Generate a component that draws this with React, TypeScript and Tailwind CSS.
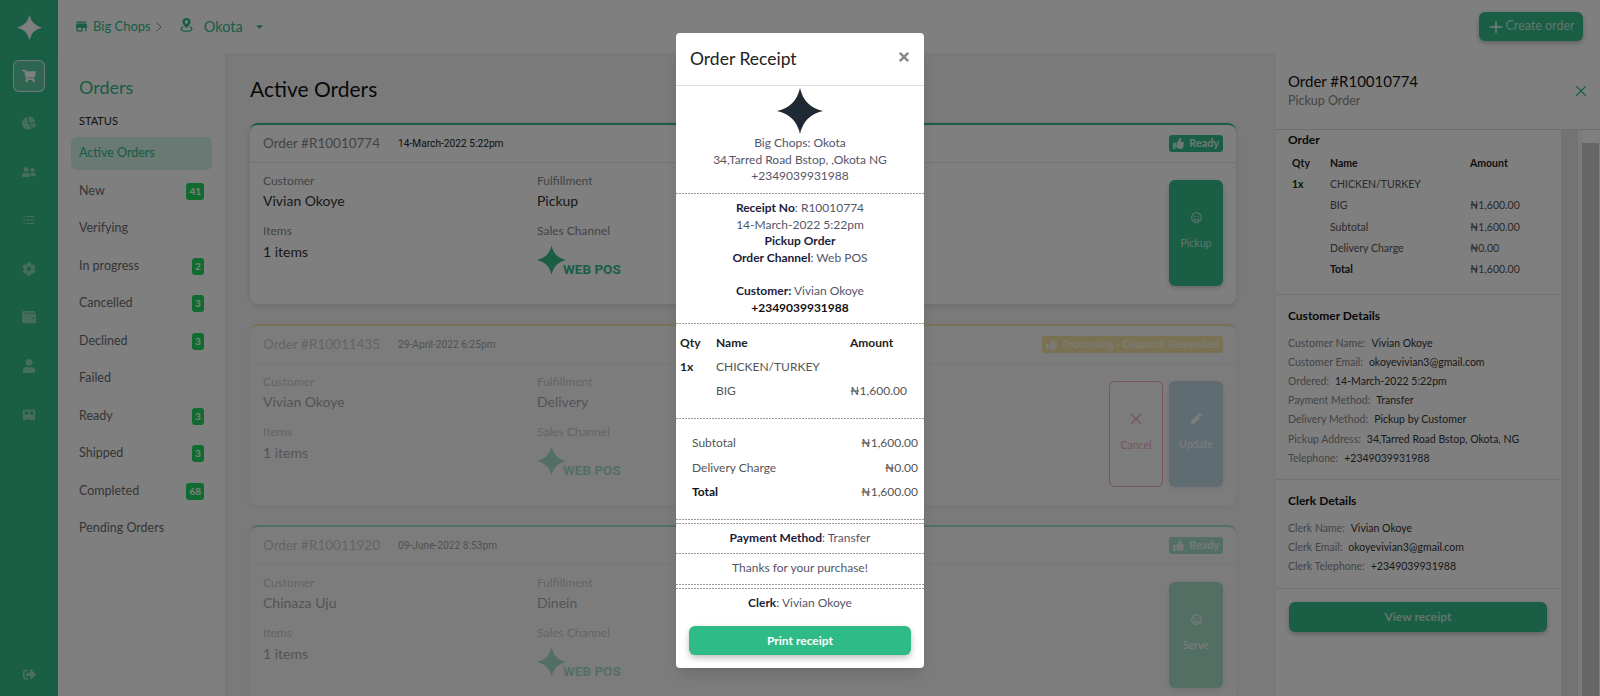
import React from 'react';
import { FaShoppingCart, FaChartPie, FaUserFriends, FaCog, FaWallet, FaUser, FaThumbsUp, FaRegSmile, FaPen, FaSignOutAlt, FaCaretDown, FaTimes } from 'react-icons/fa';
import { MdStore, MdFormatListBulleted } from 'react-icons/md';
import { ChevronRight, Plus, X } from 'lucide-react';

const font = "font-['Lato','Noto_Sans',sans-serif]";

function Star({ className }: { className?: string }) {
  return (
    <svg viewBox="0 0 100 100" className={className} fill="currentColor">
      <path d="M50 0 Q59 41 100 50 Q59 59 50 100 Q41 59 0 50 Q41 41 50 0 Z" />
    </svg>
  );
}

function BusIcon({ className }: { className?: string }) {
  return (
    <svg viewBox="0 0 16 14" className={className} fill="currentColor">
      <path fillRule="evenodd" d="M1 1h14v10.5a1.5 1.5 0 0 1-3 0 1.5 1.5 0 0 1-3 0 1.5 1.5 0 0 1-2 0 1.5 1.5 0 0 1-3 0 1.5 1.5 0 0 1-3 0Z M3 3v3.5h4V3Z M9 3v3.5h4V3Z" />
    </svg>
  );
}

function PinIcon({ className }: { className?: string }) {
  return (
    <svg viewBox="0 0 16 18" className={className} fill="none" stroke="currentColor">
      <path fill="currentColor" stroke="none" fillRule="evenodd" d="M8 0a5.2 5.2 0 0 1 5.2 5.2C13.2 8.6 8 13 8 13S2.8 8.6 2.8 5.2A5.2 5.2 0 0 1 8 0Zm0 3a2.2 2.2 0 1 0 0 4.4A2.2 2.2 0 0 0 8 3Z" />
      <path strokeWidth="1.6" d="M4 11.5C2.3 12.1 1 13 1 14.2 1 16 4.2 17 8 17s7-1 7-2.8c0-1.2-1.3-2.1-3-2.7" />
    </svg>
  );
}

const railIcons = [FaChartPie, FaUserFriends, MdFormatListBulleted, FaCog, FaWallet, FaUser, BusIcon];

function Rail() {
  return (
    <div className="w-[58px] shrink-0 bg-[#34bd8a] flex flex-col items-center">
      <Star className="w-[25px] h-[25px] text-white mt-[15px]" />
      <div className="w-8 h-8 mt-[20px] rounded-md border border-white/80 bg-white/20 flex items-center justify-center text-white">
        <FaShoppingCart className="text-[14px]" />
      </div>
      <div className="flex flex-col items-center gap-[32.6px] mt-[23px] text-white/45">
        {railIcons.map((Icon, i) => (
          <div key={i} className="h-[16px] w-[16px] flex items-center justify-center">
            <Icon className="w-[14px] h-[14px]" />
          </div>
        ))}
      </div>
      <FaSignOutAlt className="mt-auto mb-[15px] text-white/50 text-[13px]" />
    </div>
  );
}

const statuses: { label: string; count?: string; active?: boolean }[] = [
  { label: 'Active Orders', active: true },
  { label: 'New', count: '41' },
  { label: 'Verifying' },
  { label: 'In progress', count: '2' },
  { label: 'Cancelled', count: '3' },
  { label: 'Declined', count: '3' },
  { label: 'Failed' },
  { label: 'Ready', count: '3' },
  { label: 'Shipped', count: '3' },
  { label: 'Completed', count: '68' },
  { label: 'Pending Orders' },
];

function StatusMenu() {
  return (
    <div className="w-[167px] shrink-0 bg-white pl-[13px] pr-[13px] pt-[23px]">
      <div className="pl-[8px] text-[18px] leading-[22px] text-[#2fbb87]">Orders</div>
      <div className="pl-[8px] mt-[16px] text-[11px] leading-[14px] text-[#222]">STATUS</div>
      <div className="mt-[9px] flex flex-col">
        {statuses.map((s) => (
          <div
            key={s.label}
            className={`h-[33px] mb-[4.5px] rounded-md pl-[8px] pr-[8px] flex items-center justify-between text-[12.5px] ${s.active ? 'bg-[#d2f2e6] text-[#2fbb87]' : 'text-[#6b6b6b]'}`}
          >
            <span>{s.label}</span>
            {s.count && (
              <span className="h-[17px] px-[3px] min-w-[12px] rounded-[3px] bg-[#1fd760] text-white text-[10px] font-bold flex items-center justify-center">
                {s.count}
              </span>
            )}
          </div>
        ))}
      </div>
    </div>
  );
}

type Action = { label: string; kind: 'green' | 'blue' | 'red' | 'mint'; icon: React.ReactNode };

function OrderCard({ no, date, customer, fulfillment, badge, badgeClass, border, faded, actions }: {
  no: string; date: string; customer: string; fulfillment: string; badge: string; badgeClass: string; border: string; faded?: boolean; actions: Action[];
}) {
  return (
    <div className={`h-[181px] shrink-0 rounded-lg bg-white border-t-2 shadow-[0_2px_6px_rgba(0,0,0,0.12)] ${border} ${faded ? 'opacity-40' : ''}`}>
      <div className="h-[38px] pl-[13px] pr-[13px] flex items-center border-b border-[#e6e6e6]">
        <span className="w-[135px] text-[13.5px] text-[#888]">{no}</span>
        <span className="text-[10.2px] text-[#222] font-['Roboto',sans-serif]">{date}</span>
        <span className={`ml-auto h-[17px] px-[4px] rounded-[3px] flex items-center gap-[5px] text-[10.8px] font-bold text-white/80 ${badgeClass}`}>
          <FaThumbsUp className="text-[11px]" />
          {badge}
        </span>
      </div>
      <div className="pl-[13px] pr-[13px] pt-[9px] flex">
        <div className="w-[274px]">
          <div className="text-[12px] leading-[18px] text-[#888]">Customer</div>
          <div className="mt-[1px] text-[14px] leading-[20px] text-[#333]">{customer}</div>
          <div className="mt-[11px] text-[12px] leading-[18px] text-[#888]">Items</div>
          <div className="mt-[2px] text-[14px] leading-[20px] text-[#333]">1 items</div>
        </div>
        <div className="flex-1">
          <div className="text-[12px] leading-[18px] text-[#888]">Fulfillment</div>
          <div className="mt-[1px] text-[14px] leading-[20px] text-[#333]">{fulfillment}</div>
          <div className="mt-[11px] text-[12px] leading-[18px] text-[#888]">Sales Channel</div>
          <div className="mt-[5px] h-[30px] flex">
            <Star className="w-[29px] h-[30px] text-[#34bd8a]" />
            <span className="-ml-[3px] mt-[15px] text-[13.5px] leading-[18px] font-bold text-[#34bd8a] font-['Roboto',sans-serif]">WEB POS</span>
          </div>
        </div>
        <div className="flex gap-[6px] mt-[8px]">
          {actions.map((a) => (
            <div
              key={a.label}
              className={`w-[54px] h-[106px] rounded-md flex flex-col items-center pt-[31px] gap-[13px] text-[10.5px] shadow-[0_2px_5px_rgba(0,0,0,0.2)] ${
                a.kind === 'green' ? 'bg-[#34bd8a] text-white/70' : a.kind === 'blue' ? 'bg-[#6fb0c8] text-white' : a.kind === 'mint' ? 'bg-[#34bd8a] text-white' : 'border border-[#e0455f] text-[#e0455f] shadow-none'
              }`}
            >
              <span className="h-[12px] flex items-center">{a.icon}</span>
              <span>{a.label}</span>
            </div>
          ))}
        </div>
      </div>
    </div>
  );
}

function Orders() {
  return (
    <div className="flex-1 min-w-0 bg-[#f5f5f5] pl-[25px] pr-[39px] pt-[24px] overflow-hidden shadow-[inset_4px_0_6px_-4px_rgba(0,0,0,0.08)]">
      <h1 className="text-[21px] leading-[24px] text-[#111]">Active Orders</h1>
      <div className="mt-[22px] flex flex-col gap-[20px]">
        <OrderCard
          no="Order #R10010774" date="14-March-2022 5:22pm" customer="Vivian Okoye" fulfillment="Pickup"
          badge="Ready" badgeClass="bg-[#34bd8a]" border="border-[#34bd8a]"
          actions={[{ label: 'Pickup', kind: 'green', icon: <FaRegSmile className="text-[11px]" /> }]}
        />
        <OrderCard
          faded no="Order #R10011435" date="29-April-2022 6:25pm" customer="Vivian Okoye" fulfillment="Delivery"
          badge="Processing - Dispatch Requested" badgeClass="bg-[#f4c430]" border="border-[#f4c430]"
          actions={[
            { label: 'Cancel', kind: 'red', icon: <X className="w-[20px] h-[20px]" strokeWidth={1.5} /> },
            { label: 'Update', kind: 'blue', icon: <FaPen className="text-[11px]" /> },
          ]}
        />
        <OrderCard
          faded no="Order #R10011920" date="09-June-2022 8:53pm" customer="Chinaza Uju" fulfillment="Dinein"
          badge="Ready" badgeClass="bg-[#34bd8a]" border="border-[#34bd8a]"
          actions={[{ label: 'Serve', kind: 'mint', icon: <FaRegSmile className="text-[11px]" /> }]}
        />
      </div>
    </div>
  );
}

function Field({ label, value }: { label: string; value: string }) {
  return (
    <div className="h-[19.2px] flex items-center gap-[6px] text-[10.5px]">
      <span className="text-[#888]">{label}:</span>
      <span className="text-[#333]">{value}</span>
    </div>
  );
}

const itemRows = [
  { name: 'BIG', amount: '₦1,600.00' },
  { name: 'Subtotal', amount: '₦1,600.00' },
  { name: 'Delivery Charge', amount: '₦0.00' },
  { name: 'Total', amount: '₦1,600.00', bold: true },
];

function DetailPanel() {
  return (
    <div className="w-[325px] shrink-0 flex flex-col bg-white border-l border-[#eee]">
      <div className="h-[77px] shrink-0 pl-[12px] pr-[10px] border-b border-[#ddd] flex items-center justify-between">
        <div>
          <div className="text-[15px] leading-[20px] text-[#111]">Order #R10010774</div>
          <div className="text-[12.5px] leading-[20px] text-[#888]">Pickup Order</div>
        </div>
        <X className="w-[18px] h-[18px] text-[#34bd8a]" strokeWidth={1.5} />
      </div>
      <div className="flex-1 flex min-h-0">
        <div className="w-[284px] shrink-0">
          <div className="px-[12px] pt-[2px] h-[165px] border-b border-[#e4e4e4]">
            <div className="text-[12px] leading-[16px] font-bold text-[#111]">Order</div>
            <div className="mt-[5px] grid grid-cols-[38px_140px_1fr] pl-[4px] text-[10.5px] text-[#555] auto-rows-[21.3px] items-center">
              <span className="font-bold text-[#222]">Qty</span>
              <span className="font-bold text-[#222]">Name</span>
              <span className="font-bold text-[#222]">Amount</span>
              <span className="font-bold text-[#222]">1x</span>
              <span className="col-span-2">CHICKEN/TURKEY</span>
              {itemRows.map((r) => (
                <React.Fragment key={r.name}>
                  <span />
                  <span className={r.bold ? 'font-bold text-[#222]' : ''}>{r.name}</span>
                  <span>{r.amount}</span>
                </React.Fragment>
              ))}
            </div>
          </div>
          <div className="px-[12px] pt-[13px] h-[185px] border-b border-[#e4e4e4]">
            <div className="text-[12px] leading-[16px] font-bold text-[#111]">Customer Details</div>
            <div className="mt-[10px]">
              <Field label="Customer Name" value="Vivian Okoye" />
              <Field label="Customer Email" value="okoyevivian3@gmail.com" />
              <Field label="Ordered" value="14-March-2022 5:22pm" />
              <Field label="Payment Method" value="Transfer" />
              <Field label="Delivery Method" value="Pickup by Customer" />
              <Field label="Pickup Address" value="34,Tarred Road Bstop, Okota, NG" />
              <Field label="Telephone" value="+2349039931988" />
            </div>
          </div>
          <div className="px-[12px] pt-[13px] h-[109px] border-b border-[#e4e4e4]">
            <div className="text-[12px] leading-[16px] font-bold text-[#111]">Clerk Details</div>
            <div className="mt-[10px]">
              <Field label="Clerk Name" value="Vivian Okoye" />
              <Field label="Clerk Email" value="okoyevivian3@gmail.com" />
              <Field label="Clerk Telephone" value="+2349039931988" />
            </div>
          </div>
          <div className="px-[13px] pt-[13px]">
            <div className="h-[30px] rounded-md bg-[#34bd8a] text-white/70 text-[12px] font-bold flex items-center justify-center shadow-[0_2px_5px_rgba(0,0,0,0.25)]">View receipt</div>
          </div>
        </div>
        <div className="w-[1px] shrink-0" />
        <div className="w-[17px] shrink-0 bg-[#e6e6e6]" />
        <div className="w-[4px] shrink-0 bg-[#f8f8f8]" />
        <div className="w-[17px] shrink-0 bg-[#cdcdcd] mt-[13px]" />
      </div>
    </div>
  );
}

function Dash({ double }: { double?: boolean }) {
  const line = 'h-px shrink-0 bg-[repeating-linear-gradient(90deg,#999_0_2px,transparent_2px_3px)]';
  if (double) {
    return (
      <div className="flex flex-col gap-[3px] shrink-0">
        <div className={line} />
        <div className={line} />
      </div>
    );
  }
  return <div className={line} />;
}

function Receipt() {
  return (
    <div className="absolute left-[676px] top-[33px] w-[248px] h-[635px] bg-white rounded-[4px] flex flex-col text-[12px] text-[#55556a] shadow-lg">
      <div className="h-[53px] shrink-0 pl-[14px] pr-[13px] flex items-center justify-between border-b border-[#dedede]">
        <span className="text-[17.5px] text-[#222]">Order Receipt</span>
        <FaTimes className="text-[#8a8a8a] text-[14px] -mt-[5px]" />
      </div>
      <div className="h-[107px] shrink-0 flex flex-col items-center text-center leading-[16.5px]">
        <Star className="w-[46px] h-[46px] text-[#1f2933] mt-[2px] mb-[1px]" />
        <div>Big Chops: Okota</div>
        <div>34,Tarred Road Bstop, ,Okota NG</div>
        <div>+2349039931988</div>
      </div>
      <Dash />
      <div className="h-[129px] shrink-0 pt-[6px] text-center leading-[16.6px]">
        <div><b className="text-[#1c1c3a]">Receipt No</b>: R10010774</div>
        <div>14-March-2022 5:22pm</div>
        <div><b className="text-[#1c1c3a]">Pickup Order</b></div>
        <div><b className="text-[#1c1c3a]">Order Channel</b>: Web POS</div>
        <div className="mt-[16.6px]"><b className="text-[#1c1c3a]">Customer:</b> Vivian Okoye</div>
        <div><b className="text-[#111]">+2349039931988</b></div>
      </div>
      <Dash />
      <div className="h-[94px] shrink-0 pt-[7px] pl-[4px] grid grid-cols-[36px_134px_1fr] auto-rows-[24px] items-center text-[#555] content-start">
        <b className="text-[#222]">Qty</b>
        <b className="text-[#222]">Name</b>
        <b className="text-[#222]">Amount</b>
        <b className="text-[#222]">1x</b>
        <span className="col-span-2">CHICKEN/TURKEY</span>
        <span />
        <span>BIG</span>
        <span>₦1,600.00</span>
      </div>
      <Dash />
      <div className="h-[100px] shrink-0 pt-[12px] pl-[16px] pr-[6px] text-[#555]">
        <div className="h-[24.5px] flex items-center justify-between"><span>Subtotal</span><span>₦1,600.00</span></div>
        <div className="h-[24.5px] flex items-center justify-between"><span>Delivery Charge</span><span>₦0.00</span></div>
        <div className="h-[24.5px] flex items-center justify-between"><b className="text-[#111]">Total</b><span>₦1,600.00</span></div>
      </div>
      <Dash double />
      <div className="h-[29px] shrink-0 pb-[2px] flex items-center justify-center"><span><b className="text-[#1c1c3a]">Payment Method</b>: Transfer</span></div>
      <Dash />
      <div className="h-[30px] shrink-0 pb-[2px] flex items-center justify-center">Thanks for your purchase!</div>
      <Dash double />
      <div className="h-[30px] shrink-0 pb-[3px] flex items-center justify-center"><span><b className="text-[#1c1c3a]">Clerk</b>: Vivian Okoye</span></div>
      <div className="px-[13px] pt-[7px]">
        <div className="h-[29px] rounded-md bg-[#2fbb87] text-white text-[12px] font-bold flex items-center justify-center shadow-[0_3px_6px_rgba(0,0,0,0.25)]">Print receipt</div>
      </div>
    </div>
  );
}

export default function App() {
  return (
    <div className={`relative h-screen w-full overflow-hidden flex ${font}`}>
      <Rail />
      <div className="flex-1 min-w-0 flex flex-col">
        <div className="h-[53px] shrink-0 bg-white pl-[16px] pr-[17px] flex items-center text-[#2fbb87] shadow-[0_2px_4px_rgba(0,0,0,0.04)]">
          <MdStore className="text-[15px]" />
          <span className="ml-[4px] text-[13px]">Big Chops</span>
          <ChevronRight className="w-[16px] h-[16px] text-[#888]" strokeWidth={1.5} />
          <PinIcon className="ml-[13px] w-[13px] h-[14px] -mt-[3px]" />
          <span className="ml-[11px] text-[14.5px]">Okota</span>
          <FaCaretDown className="ml-[11px] text-[11px]" />
          <div className="ml-auto w-[104px] h-[29px] rounded-md bg-[#34bd8a] text-white/70 text-[12.5px] flex items-center justify-center shadow-[0_2px_5px_rgba(0,0,0,0.25)]">
            <Plus className="w-[18px] h-[18px]" strokeWidth={2.5} />
            Create order
          </div>
        </div>
        <div className="flex-1 min-h-0 flex">
          <StatusMenu />
          <Orders />
          <DetailPanel />
        </div>
      </div>
      <div className="absolute inset-0 bg-black/50" />
      <Receipt />
    </div>
  );
}
